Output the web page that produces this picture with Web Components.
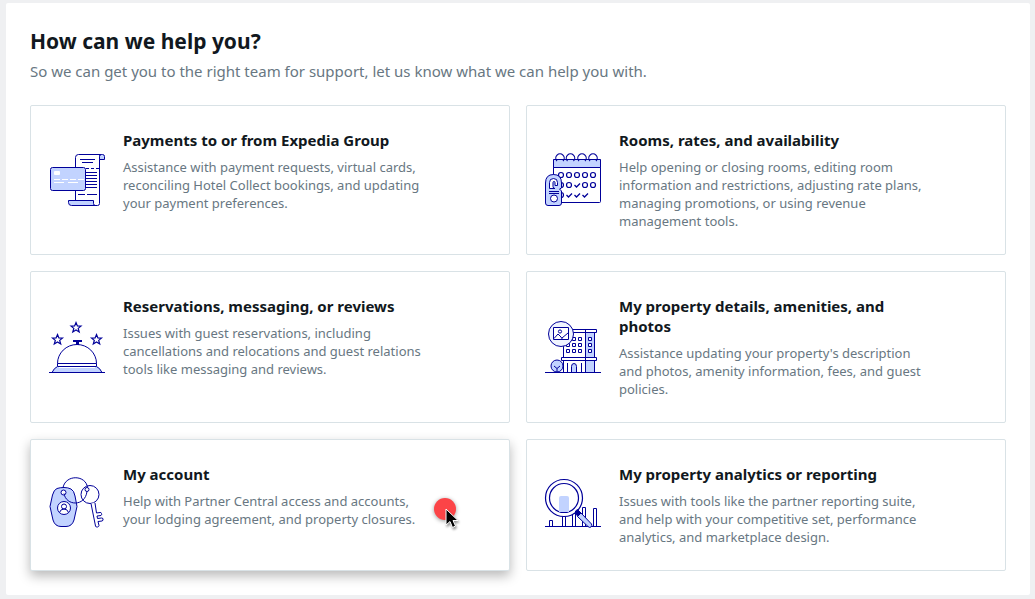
<!DOCTYPE html>
<html lang="en">
<head>
<meta charset="utf-8">
<title>How can we help you?</title>
<style>
  body { margin: 0; background: #eff0f2; font-family: "Noto Sans", "Open Sans", sans-serif; color: #111820; }
</style>
</head>
<body>
<help-panel>
  <span slot="heading">How can we help you?</span>
  <span slot="intro">So we can get you to the right team for support, let us know what we can help you with.</span>
  <topic-card icon="payments"><span slot="title">Payments to or from Expedia Group</span>Assistance with payment requests, virtual cards, reconciling Hotel Collect bookings, and updating your payment preferences.</topic-card>
  <topic-card icon="calendar"><span slot="title">Rooms, rates, and availability</span>Help opening or closing rooms, editing room information and restrictions, adjusting rate plans, managing promotions, or using revenue management tools.</topic-card>
  <topic-card icon="bell"><span slot="title">Reservations, messaging, or reviews</span>Issues with guest reservations, including cancellations and relocations and guest relations tools like messaging and reviews.</topic-card>
  <topic-card icon="property"><span slot="title">My property details, amenities, and photos</span>Assistance updating your property's description and photos, amenity information, fees, and guest policies.</topic-card>
  <topic-card icon="account" active><span slot="title">My account</span>Help with Partner Central access and accounts, your lodging agreement, and property closures.<click-pointer slot="pointer"></click-pointer></topic-card>
  <topic-card icon="analytics"><span slot="title">My property analytics or reporting</span>Issues with tools like the partner reporting suite, and help with your competitive set, performance analytics, and marketplace design.</topic-card>
</help-panel>

<script>
const STAR = 'M0 -5L1.4 -1.6L5 -1.4L2.2 .9L3.2 4.5L0 2.5L-3.2 4.5L-2.2 .9L-5 -1.4L-1.4 -1.6Z';
const ICONS = {
  payments: `
    <path fill="#fff" d="M26.500 53V5.500q0-3 3-3h23q-2 0-2 2v47q0 2-2 2H25"/>
    <path class="l" d="M50.500 7.500V4.500q0-2 2-2h1q2 0 2 2v3z"/>
    <path d="M31 7.500h15M33 10.500h11M37 20.500h11M37 23.500h11M37 26.500h11M37 29.500h11M37 32.500h11M37 35.500h11M29 42.500h7M38 42.500h10"/>
    <path stroke-dasharray="3 2" d="M37 16.500h13"/>
    <path class="l" d="M19.500 48.500h25v3q0 2 2 2h-24q-3 0-3-3z"/>
    <rect class="l" x="1.500" y="15.500" width="35" height="23" rx="2"/>
    <rect x="5" y="19" width="6" height="4" rx="1" fill="#fff" stroke="none"/>
    <path stroke="#fff" d="M5 27.500h6M13 27.500h6M21 27.500h6M29 27.500h6M5 30.500h10M19 30.500h10"/>`,
  calendar: `
    <rect x="8.500" y="7.500" width="47" height="43" rx="1" fill="#fff"/>
    <path class="l" d="M8.500 7.500h47v8h-47z"/>
    <path stroke-width="1.200" d="M12 9a4.200 4.200 0 1 1 6 0M22.500 9a4.200 4.200 0 1 1 6 0M34 9a4.200 4.200 0 1 1 6 0M45 9a4.200 4.200 0 1 1 6 0"/>
    <g stroke-width="1.200"><circle cx="16" cy="23" r="2.500"/><circle cx="24" cy="23" r="2.500"/><circle cx="32" cy="23" r="2.500"/><circle cx="40" cy="23" r="2.500"/><circle cx="48" cy="23" r="2.500"/>
    <circle cx="16" cy="33" r="2.500"/><circle cx="24" cy="33" r="2.500"/><circle cx="40" cy="33" r="2.500"/><circle cx="48" cy="33" r="2.500"/><circle cx="16" cy="43" r="2.500"/></g>
    <path stroke-width="1.300" d="M29.500 33l2 2 3.500-3.500M21.500 43l2 2 3.500-3.500M29.500 43l2 2 3.500-3.500M37.500 43l2 2 3.500-3.500"/>
    <path class="l" d="M.5 31q0-8.500 8-8.500t8 8.500v5l-2 1 2 2v12q0 2.500-2.500 2.500H3q-2.500 0-2.500-2.500z"/>
    <path fill="#fff" d="M4.500 36.500v-6q0-4 4-4t4 4v3h-2.500v-3q0-1-1-1t-1 1v4q0 2 2 2z"/>
    <path d="M4 39.500h10M4 41.500h10"/>
    <circle cx="9" cy="46.500" r="3.500" fill="#fff"/>`,
  bell: `
    <g stroke-width="1.200"><path transform="translate(27 8.500)" d="${STAR}"/><path transform="translate(8.500 20.500)" d="${STAR}"/><path transform="translate(47.500 20.500)" d="${STAR}"/></g>
    <path class="d" stroke="none" d="M24 21h9v2h-3v3h-3v-3h-3z"/>
    <path d="M8.500 47.500v-3a19.500 19 0 0 1 39 0v3M8.500 44.500h39"/>
    <path class="l" d="M8.500 47.500h39q3.500 1.500 5.500 6h-50q2-4.500 5.500-6z"/>
    <path stroke="#fff" d="M10 48.500h36"/><path d="M0 53.500h56"/>`,
  property: `
    <path fill="#fff" d="M18.500 13.500h31v40h-31z"/><path class="l" d="M40.500 13.500h9v40h-9z"/>
    <path fill="#fff" d="M18.500 10.500h33v3h-33zM16.500 38.500h35v3h-35z"/><path d="M40.500 10.500v3M40.500 38.500v3M36.500 44v9M22.500 44v9"/>
    <g fill="#fff"><path d="M21.500 24.500h3v3h-3zM27.500 18.500h3v3h-3zM27.500 24.500h3v3h-3zM33.500 18.500h3v3h-3zM33.500 24.500h3v3h-3zM43.500 18.500h3v3h-3zM43.500 24.500h3v3h-3zM43.500 30.500h3v3h-3zM33.500 30.500h3v3h-3zM27.500 30.500h3v3h-3zM21.500 30.500h3v3h-3z"/></g>
    <path class="l" d="M26.500 53.500v-6q0-3 2.500-3t2.500 3v6z"/>
    <circle cx="16" cy="15" r="12.500" fill="#f0f4ff"/><path fill="#fff" d="M8.500 8.500h15v12h-15z"/>
    <circle cx="15" cy="12.500" r="1.600"/><path d="M9 19.500l4-4.500 3 3 1.500 2.500M17 19l6-5"/>
    <circle class="l" cx="12" cy="47" r="6"/><path d="M12 53.500v-4l-3-2.500M12 49.500l3-2.500"/>
    <path d="M0 53.500h56"/>`,
  account: `
    <path class="l" d="M8 11.500Q11 10.500 15 10.500T22 12Q25 13.500 26 19L28 29.500L25 43Q23 49.500 17 49.500h-5Q6 49.500 4 43L1 29.500L3.500 18Q5 12.500 8 11.500z"/>
    <circle cx="14.500" cy="15.500" r="2.500" fill="#fff"/>
    <path d="M14 10.500C17-3 37-2 38.500 10.500M15 16.500C17 29 36 30 38 14.500"/>
    <circle cx="41" cy="17.500" r="9"/><circle cx="38" cy="12.500" r="2"/>
    <path fill="#fff" d="M42 26.500L46.500 49q.5 1.500 2 1t1.500-1.500L49 44.500l4-.5q1.500-.5 1-2t-1.500-1l-4 .5-.5-2.500 4-.5q1-.5.5-2t-1.500-1l-3.500.5L46 26"/>
    <circle cx="15" cy="31" r="6.500" fill="#fff"/><circle cx="15" cy="29.500" r="2.500"/><path d="M10.500 35.500q1-3.500 4.500-3.500t4.500 3.500"/>`,
  analytics: `
    <path fill="#fff" d="M4.500 49.500v-6h3v6M17.500 49.500v-11h3v11M27.500 49.500v-13h3v13M37.500 49.500v-19h3v19M48.500 49.500v-18h3v18"/>
    <path d="M0 49.500h56"/>
    <g stroke-width="1.200"><circle cx="19" cy="21" r="18.500" fill="#fff"/><circle cx="19" cy="21" r="14.500"/></g>
    <path fill="#c2d3ff" stroke="none" d="M14 35V21q0-2 2-2h6q2 0 2 2v14z"/>
    <path class="d" d="M30.500 34l2-1.500L36 36l-3 3.500-2.500-3z"/>
    <path class="l" d="M32.500 39.500L43 49.500q1.500 1.500 3 .5t.5-3L36 36z"/>`
};

function define(name, html, setup) {
  const template = document.createElement('template');
  template.innerHTML = html;
  customElements.define(name, class extends HTMLElement {
    constructor() {
      super();
      this.attachShadow({ mode: 'open' }).append(template.content.cloneNode(true));
    }
    connectedCallback() { if (setup) setup(this); }
  });
}

define('topic-icon', `
  <style>
    :host { display: block; width: 56px; height: 56px; }
    svg { display: block; width: 100%; height: 100%; overflow: visible; fill: none; stroke: #000099; stroke-width: 1; }
    .l { fill: #c2d3ff; }
    .d { fill: #000099; }
  </style>
  <svg viewBox="0 0 56 56" aria-hidden="true"></svg>`,
  el => { el.shadowRoot.querySelector('svg').innerHTML = ICONS[el.getAttribute('name')]; });

define('click-pointer', `
  <style>
    :host { display: block; width: 32px; height: 36px; }
    svg { display: block; overflow: visible; }
    circle { filter: drop-shadow(0 1px 2px #0006); }
    path { filter: drop-shadow(1px 2px 1px #0006); }
  </style>
  <svg width="32" height="36" aria-hidden="true">
    <circle cx="15" cy="15" r="11" fill="#fc4447"/>
    <path d="M16 15v16l4-3.500 2.500 6 3-1.500-2.500-5.500h5z" fill="#000" stroke="#fff" stroke-width="1"/>
  </svg>`);

define('topic-card', `
  <style>
    :host { display: flex; position: relative; }
    a { flex: 1; display: flex; align-items: center; gap: 18px; box-sizing: border-box; padding: 24px 18px;
        border: 1px solid #d9e2e6; border-radius: 2px; background: #fff; color: inherit; text-decoration: none; }
    :host([active]) a { box-shadow: 0 5px 12px 0 #00000047; }
    .icon { flex: none; }
    .text { align-self: flex-start; max-width: 310px; }
    h2 { margin: 0 0 8px; font-size: 15px; line-height: 20px; font-weight: 700; }
    p { margin: 0; font-size: 13px; line-height: 18px; color: #687782; }
    ::slotted([slot="pointer"]) { position: absolute; left: 400px; top: 55px; }
  </style>
  <a href="#"><div class="icon"></div><div class="text"><h2><slot name="title"></slot></h2><p><slot></slot></p></div></a>
  <slot name="pointer"></slot>`,
  el => {
    const icon = document.createElement('topic-icon');
    icon.setAttribute('name', el.getAttribute('icon'));
    el.shadowRoot.querySelector('.icon').replaceChildren(icon);
  });

define('help-panel', `
  <style>
    :host { display: block; margin: 3px 5px 4px 6px; padding: 24px; background: #fff; border-radius: 2px; }
    h1 { margin: 0; font-size: 21px; line-height: 28px; font-weight: 700; }
    p { margin: 4px 0 22px; font-size: 15px; line-height: 24px; color: #687782; }
    .grid { display: grid; grid-template-columns: 1fr 1fr; gap: 16px; }
  </style>
  <h1><slot name="heading"></slot></h1>
  <p><slot name="intro"></slot></p>
  <div class="grid"><slot></slot></div>`);
</script>
</body>
</html>
